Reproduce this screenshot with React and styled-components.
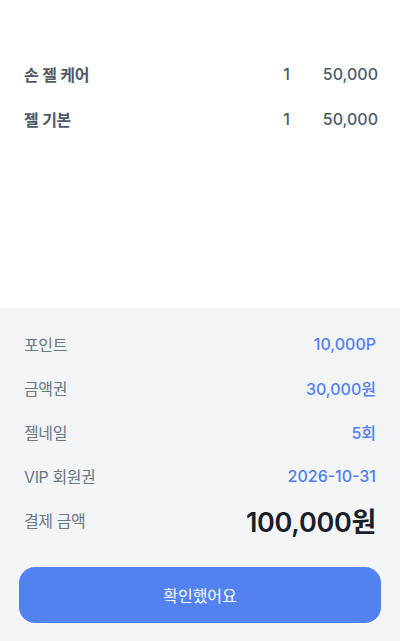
import styled, { createGlobalStyle } from "styled-components";

const GlobalStyle = createGlobalStyle`
  html, body {
    margin: 0;
    padding: 0;
    background: #ffffff;
  }
  body {
    font-family: Inter, "Noto Sans CJK KR", sans-serif;
  }
`;

const Page = styled.div`
  width: 400px;
  height: 641px;
  display: flex;
  flex-direction: column;
  overflow: hidden;
`;

const ItemList = styled.div`
  height: 308px;
  box-sizing: border-box;
  padding: 51px 22px 0 24px;
  background: #ffffff;
`;

const ItemRow = styled.div`
  height: 45px;
  display: grid;
  grid-template-columns: 1fr auto 88px;
  align-items: center;
  font-size: 16px;
  color: #4e5968;
`;

const ItemName = styled.span`
  font-weight: 600;
  letter-spacing: -0.3px;
`;

const ItemQty = styled.span`
  font-weight: 500;
`;

const ItemPrice = styled.span`
  text-align: right;
  font-weight: 500;
`;

const Summary = styled.div`
  flex: 1;
  background: #f2f4f6;
  padding: 14px 24px 0 24px;
  display: flex;
  flex-direction: column;
`;

const SummaryRow = styled.div`
  height: 44px;
  display: flex;
  align-items: center;
  justify-content: space-between;
`;

const Label = styled.span`
  font-size: 16px;
  color: #6b7684;
  letter-spacing: -0.4px;
`;

const Value = styled.span`
  font-size: 16px;
  font-weight: 500;
  color: #4f80f2;
`;

const Total = styled.span`
  font-size: 27px;
  font-weight: 600;
  color: #191f28;
  letter-spacing: -0.3px;
`;

const ConfirmButton = styled.button`
  margin: 25px -5px 0 -5px;
  height: 56px;
  border: none;
  border-radius: 16px;
  background: #5282f0;
  color: #ffffff;
  font-family: inherit;
  font-size: 16px;
  font-weight: 400;
  cursor: pointer;
`;

const items = [
  { name: "손 젤 케어", qty: 1, price: "50,000" },
  { name: "젤 기본", qty: 1, price: "50,000" },
];

const summary = [
  { label: "포인트", value: "10,000P" },
  { label: "금액권", value: "30,000원" },
  { label: "젤네일", value: "5회" },
  { label: "VIP 회원권", value: "2026-10-31" },
];

export default function App() {
  return (
    <Page>
      <GlobalStyle />
      <ItemList>
        {items.map((item) => (
          <ItemRow key={item.name}>
            <ItemName>{item.name}</ItemName>
            <ItemQty>{item.qty}</ItemQty>
            <ItemPrice>{item.price}</ItemPrice>
          </ItemRow>
        ))}
      </ItemList>
      <Summary>
        {summary.map((row) => (
          <SummaryRow key={row.label}>
            <Label>{row.label}</Label>
            <Value>{row.value}</Value>
          </SummaryRow>
        ))}
        <SummaryRow>
          <Label>결제 금액</Label>
          <Total>100,000원</Total>
        </SummaryRow>
        <ConfirmButton>확인했어요</ConfirmButton>
      </Summary>
    </Page>
  );
}
